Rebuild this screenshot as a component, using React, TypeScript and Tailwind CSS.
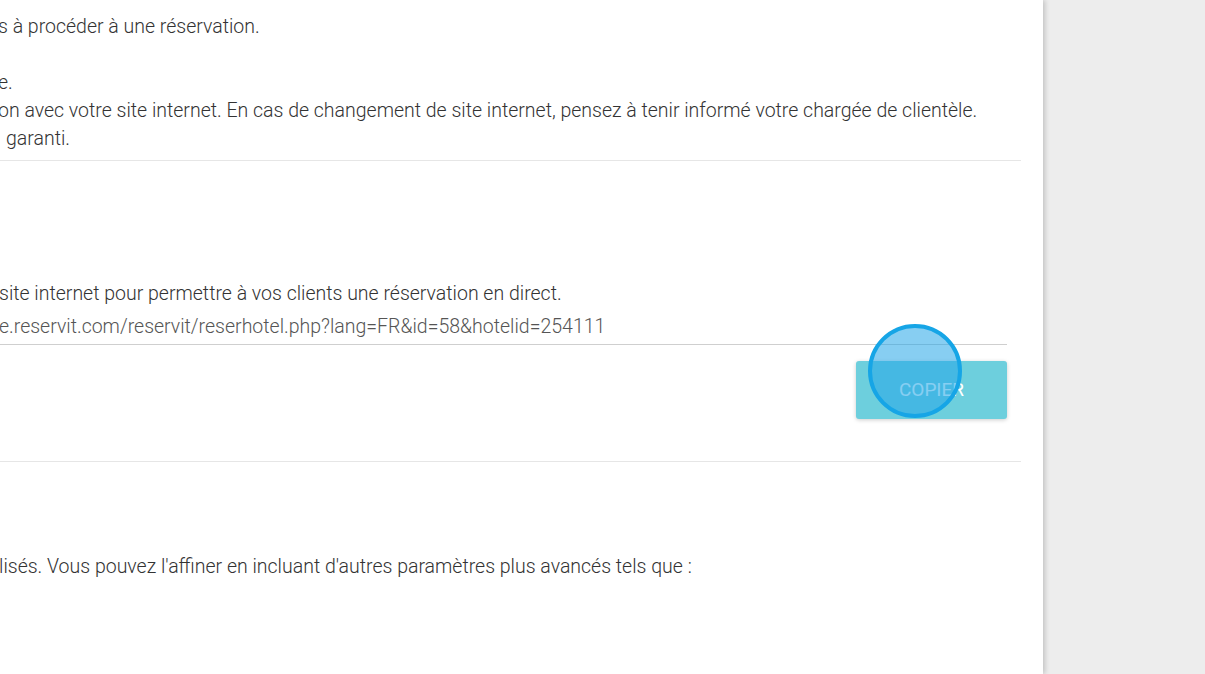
export default function App() {
  return (
    <div className="flex h-[674px] w-[1205px] overflow-hidden bg-[#ededed] font-['Roboto',sans-serif]">
      <main className="relative z-10 h-full w-[1043px] shrink-0 overflow-hidden bg-white shadow-[2px_0_5px_rgba(0,0,0,0.18)]">
        <div className="w-[1021px] text-[19.5px] font-light leading-[28px] text-[#333]">
          <section className="-ml-[2px] pt-[13px] pb-[7px]">
            <p>s à procéder à une réservation.</p>
            <p>&nbsp;</p>
            <p>e.</p>
            <p>on avec votre site internet. En cas de changement de site internet, pensez à tenir informé votre chargée de clientèle.</p>
            <p className="pl-[8px]">garanti.</p>
          </section>
          <hr className="border-0 border-t border-[#e6e6e6]" />

          <section className="pt-[119px] pb-[42px]">
            <p className="-ml-[1px]">site internet pour permettre à vos clients une réservation en direct.</p>
            <div className="mr-[14px] mt-[5px] border-b border-[#cfcfcf] pb-[3px] text-[#555]">
              <span className="-ml-[1px] block">e.reservit.com/reservit/reserhotel.php?lang=FR&amp;id=58&amp;hotelid=254111</span>
            </div>
            <div className="mr-[14px] mt-[16px] flex justify-end">
              <div className="relative">
                <button
                  type="button"
                  className="flex h-[58px] w-[151px] items-center justify-center rounded-[3px] bg-[#6dcfdd] text-[19px] font-normal text-white shadow-[0_1px_4px_rgba(0,0,0,0.2)]"
                >
                  COPIER
                </button>
                <div className="pointer-events-none absolute left-[12px] top-[-37px] h-[94px] w-[94px] rounded-full border-[4px] border-[#16a5e6] bg-[rgba(36,165,232,0.55)]" />
              </div>
            </div>
          </section>
          <hr className="border-0 border-t border-[#e6e6e6]" />

          <section className="pt-[91px]">
            <p className="-ml-[1px]">lisés. Vous pouvez l'affiner en incluant d'autres paramètres plus avancés tels que :</p>
          </section>
        </div>
      </main>
      <aside className="h-full flex-1 bg-[#ededed]" />
    </div>
  );
}
